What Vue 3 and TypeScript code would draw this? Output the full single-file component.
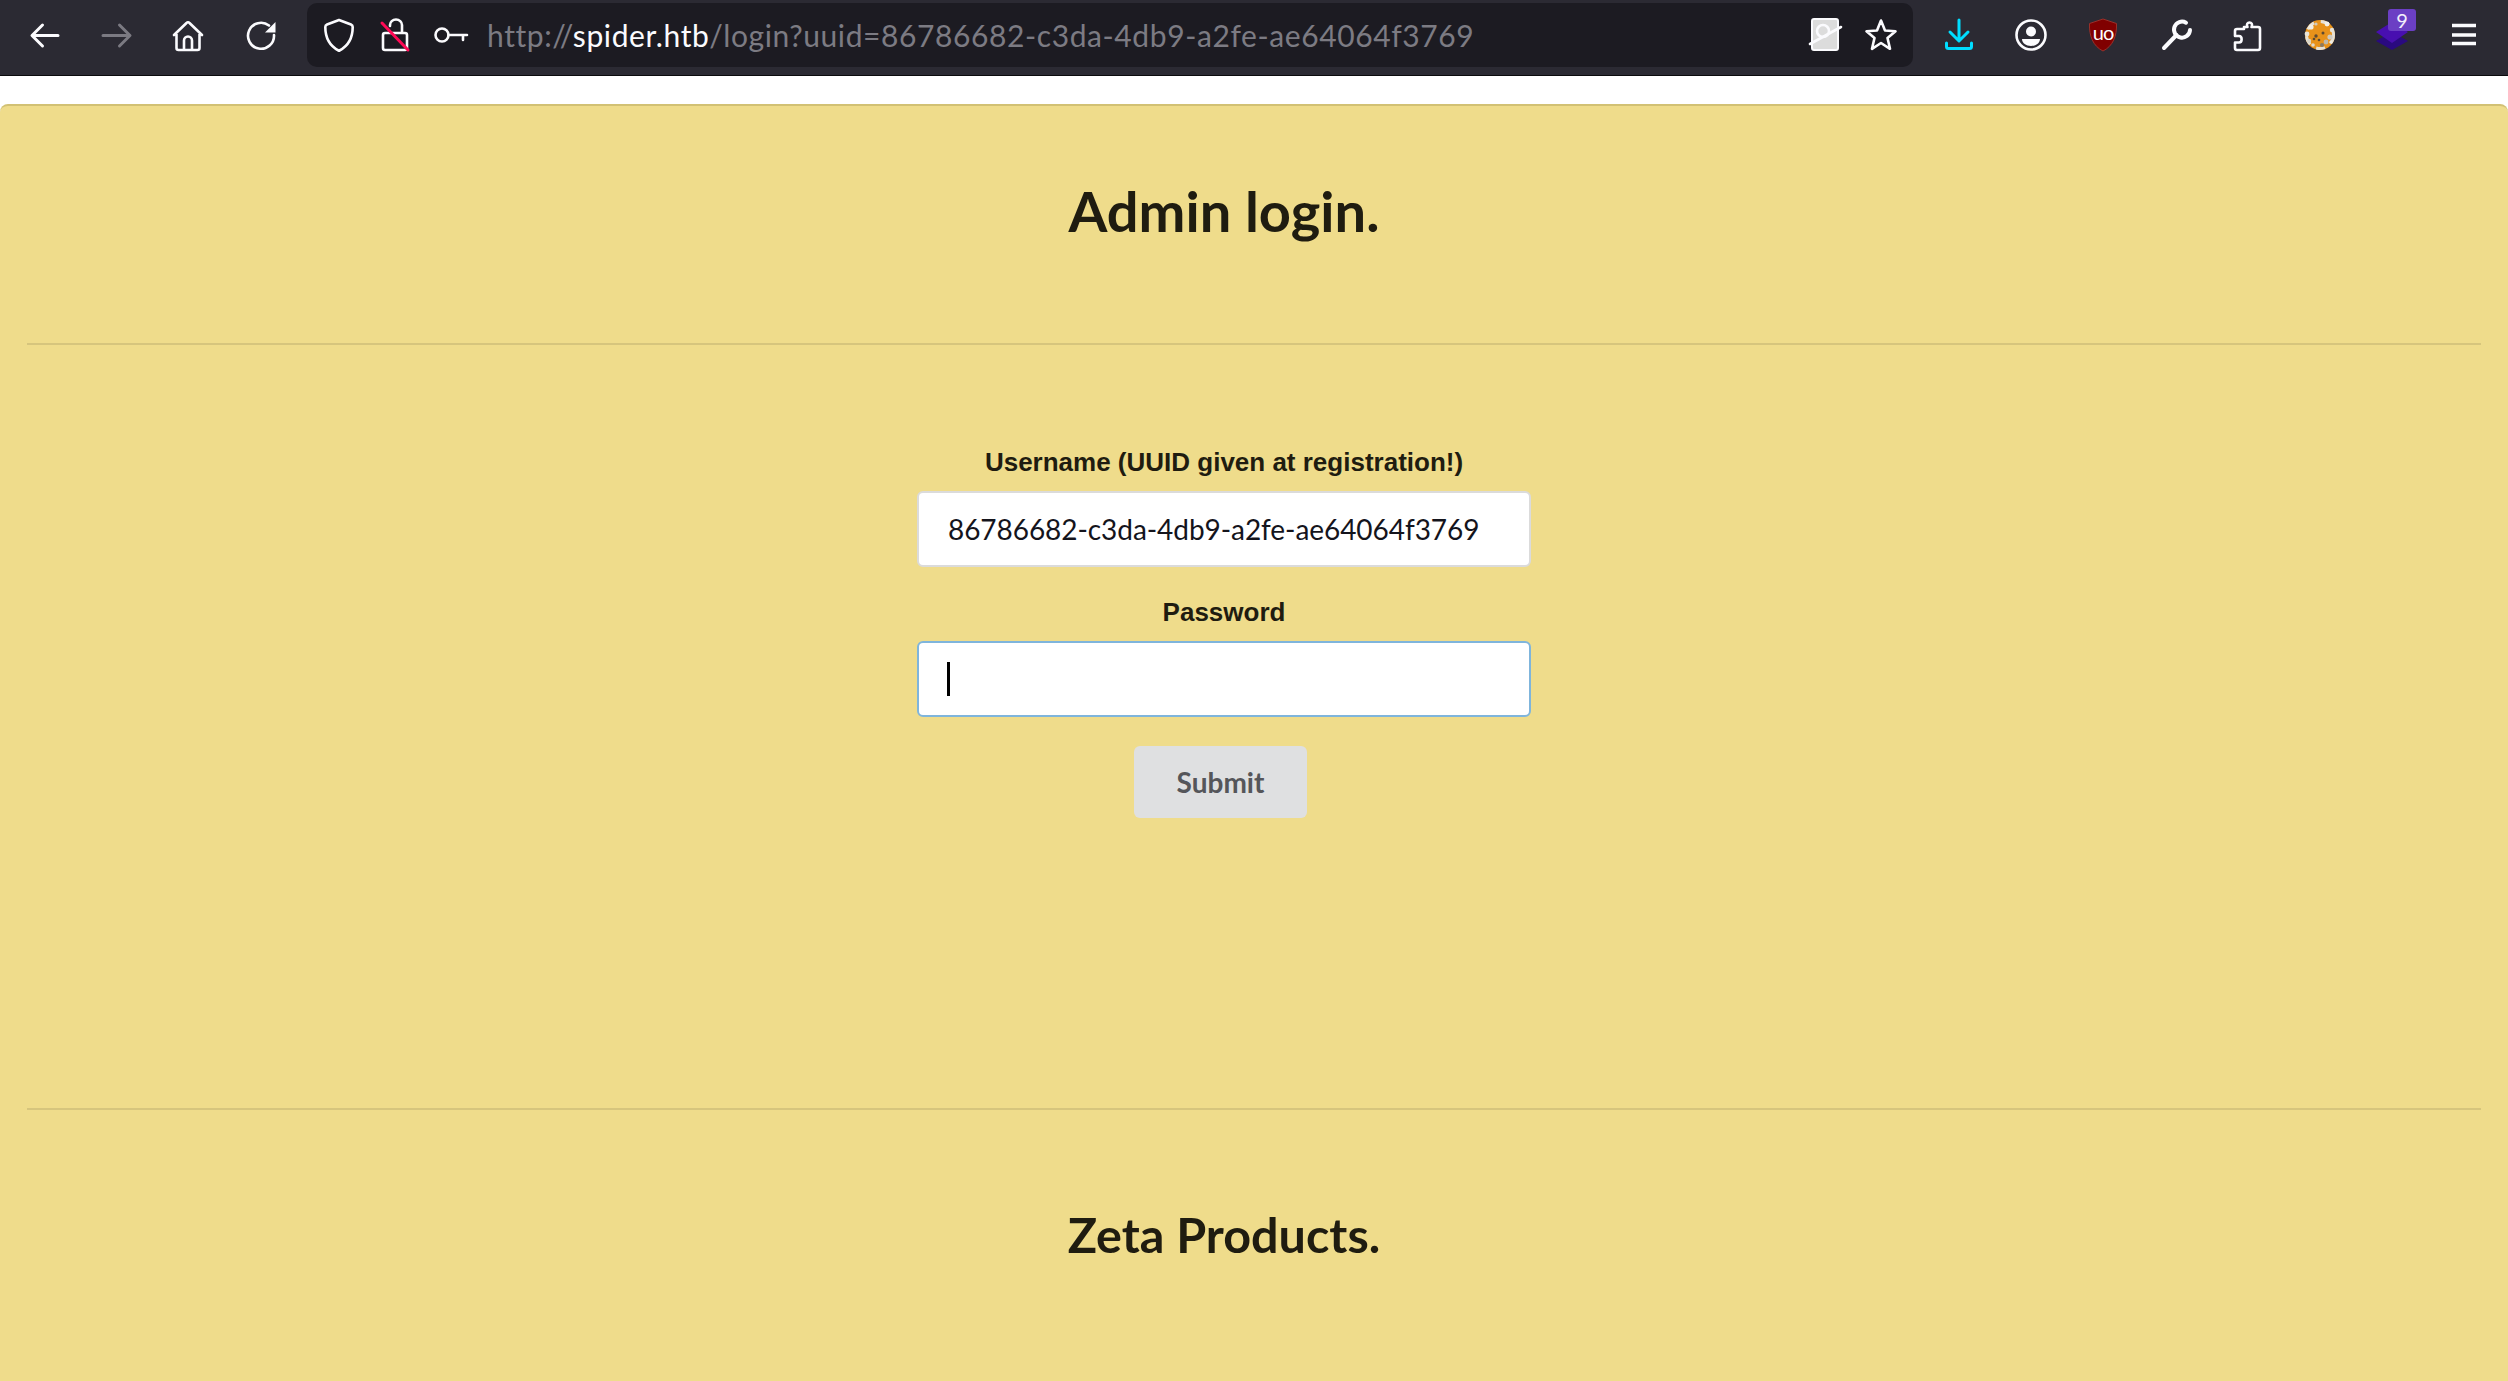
<script setup lang="ts">
const uuid = '86786682-c3da-4db9-a2fe-ae64064f3769'
const dots: [number, number, number, string][] = [
  [15, 15, 2.6, '#f1eee6'], [20, 12, 1.6, '#cfc9bc'], [31, 12, 2.4, '#f2efe8'], [36, 18, 2.2, '#e6e2d8'],
  [11, 22, 2.4, '#e9e4d8'], [13, 29, 2.2, '#d8d3c8'], [20, 24, 1.7, '#5d4a32'], [18, 27, 1.3, '#5d4a32'],
  [27, 21, 1.5, '#5d4a32'], [34, 25, 2.6, '#cfcac0'], [30, 30, 2.4, '#bdb8ac'], [26, 33, 2, '#8a7a62'],
  [23, 28, 1.3, '#5d4a32'], [17, 33, 1.8, '#ded8cc'], [35, 30, 1.6, '#f1eee6']
]
</script>

<template>
  <div class="page">
    <header class="toolbar">
      <div class="ibox">
        <svg viewBox="0 0 48 48" class="ic"><path d="M37 23.500H13M21.500 13 11 23.500 21.500 34" /></svg>
      </div>
      <div class="ibox">
        <svg viewBox="0 0 48 48" class="ic dim"><path d="M10 23.500h24M26.500 13 37 23.500 26.500 34" /></svg>
      </div>
      <div class="ibox">
        <svg viewBox="0 0 48 48" class="ic thin"><path d="M9 23 21.500 11a2 2 0 0 1 3 0L37 23M11.500 20.500V36a2 2 0 0 0 2 2h19a2 2 0 0 0 2-2V20.500M19 38v-9.500a4 4 0 0 1 8 0V38" /></svg>
      </div>
      <div class="ibox">
        <svg viewBox="0 0 48 48" class="ic thin"><path d="M32 13.500A13 13 0 1 0 37 23" /><path class="fill" d="M38.500 10v10.500H28z" /></svg>
      </div>

      <div class="urlbar">
        <div class="ibox small">
          <svg viewBox="0 0 48 48" class="ic thin"><path d="M24 8 36 12.500c1.300.5 1.700 1.300 1.700 2.500C37.700 26 33 34 24.500 38.500a1 1 0 0 1-1 0C15 34 10.300 26 10.300 15c0-1.200.4-2 1.700-2.500z" /></svg>
        </div>
        <div class="ibox small">
          <svg viewBox="0 0 48 48" class="ic thin">
            <path d="M19 14v-1a6 5.500 0 0 1 12 0v8M14 21h20a2 2 0 0 1 2 2v13a2 2 0 0 1-2 2H14a2 2 0 0 1-2-2V23a2 2 0 0 1 2-2z" />
            <path class="slash" d="M11 11 37 38" />
          </svg>
        </div>
        <div class="ibox small">
          <svg viewBox="0 0 48 48" class="ic thin"><circle cx="15" cy="23" r="6.500" /><path d="M21.500 23H40M36 23v5" /></svg>
        </div>
        <div class="url"><span class="dimtext">http://</span><span class="host">spider.htb</span><span class="dimtext">/login?uuid={{ uuid }}</span></div>
        <div class="url-end">
          <svg viewBox="0 0 48 48" class="ic wide">
            <rect class="pagefill" x="11" y="7" width="26" height="31" rx="2" />
            <circle class="lens" cx="22" cy="19" r="6" />
            <path class="lens" d="M9 32 40 15" />
          </svg>
          <svg viewBox="0 0 48 48" class="ic wide thin"><path d="M24 8.500 28 18.500 38.500 19.300 30.500 26 33 36.800 24 31 15 36.800 17.500 26 9.500 19.300 20 18.500z" /></svg>
        </div>
      </div>

      <div class="actions">
        <div class="ibox">
          <svg viewBox="0 0 48 48" class="ic cyan"><path d="M24 8V28M15 20l9 9 9-9M11.500 31v3.500a2 2 0 0 0 2 2h21a2 2 0 0 0 2-2V31" /></svg>
        </div>
        <div class="ibox">
          <svg viewBox="0 0 48 48" class="ic thin"><circle cx="24" cy="23" r="14.500" /><circle class="fill" cx="24" cy="19.500" r="5" /><path class="fill" d="M15 27h18c0 4-4 7-9 7s-9-3-9-7z" /></svg>
        </div>
        <div class="ibox">
          <svg viewBox="0 0 48 48" class="raw">
            <path d="M24 7 37.500 11.500C38 24 34 34 24 39 14 34 10 24 10.500 11.500z" fill="#800000" stroke="#99302a" stroke-width="1" />
            <text x="24" y="28" text-anchor="middle" class="ub">uo</text>
          </svg>
        </div>
        <div class="ibox">
          <svg viewBox="0 0 48 48" class="ic wrench"><path d="M34 10.700A8 8 0 1 0 38 18" /><path d="M24.500 23 12 36" /></svg>
        </div>
        <div class="ibox">
          <svg viewBox="0 0 48 48" class="ic thin"><path d="M20 15h3.500c-3-6 7-6 4 0H34a2 2 0 0 1 2 2v19a2 2 0 0 1-2 2H13a2 2 0 0 1-2-2V30.500h4c3.500 0 3.500-6.500 0-6.500h-4V19a2 2 0 0 1 2-2h7z" /></svg>
        </div>
        <div class="ibox">
          <svg viewBox="0 0 48 48" class="raw">
            <circle cx="24" cy="23" r="15" fill="#e8921a" />
            <circle class="ring" cx="24" cy="23" r="13.500" />
            <circle v-for="(d, i) in dots" :key="i" :cx="d[0]" :cy="d[1]" :r="d[2]" :fill="d[3]" />
          </svg>
        </div>
        <div class="ibox stack">
          <svg viewBox="0 0 48 48" class="raw">
            <path d="M24 20 40 29 24 38 8 29z" fill="#2a0a80" />
            <path d="M24 10 40 20 24 31 8 20z" fill="#480fb0" />
          </svg>
          <span class="badge">9</span>
        </div>
        <div class="ibox">
          <svg viewBox="0 0 48 48" class="ic menu"><path d="M12 13.500H36M12 23H36M12 31.500H36" /></svg>
        </div>
      </div>
    </header>

    <main class="panel">
      <h1 class="title">Admin login.</h1>
      <hr class="rule" />
      <form class="form" @submit.prevent>
        <label class="label" for="u">Username (UUID given at registration!)</label>
        <input id="u" class="field" type="text" :value="uuid" readonly />
        <label class="label second" for="p">Password</label>
        <div class="pw">
          <input id="p" class="field focus" type="password" readonly />
          <span class="caret"></span>
        </div>
        <button class="btn" type="button">Submit</button>
      </form>
      <hr class="rule lower" />
      <h2 class="subtitle">Zeta Products.</h2>
    </main>
  </div>
</template>

<style>
html, body { margin: 0; background: #fff; overflow: hidden; }
</style>

<style scoped>
.page { width: 2508px; height: 1381px; overflow: hidden; background: #fff; font-family: Lato, sans-serif; }
.toolbar {
  height: 75px; box-sizing: content-box; background: #2b2a33; border-bottom: 1px solid #0b0b0d;
  display: flex; align-items: flex-start; padding: 0 0 0 21px; gap: 24px; margin-bottom: 28px;
}
.ibox { width: 48px; height: 48px; margin-top: 12px; flex: none; position: relative; }
.ibox.small { margin-top: 9px; }
.ibox.small + .ibox.small { margin-left: 8px; }
.ic, .raw { width: 48px; height: 48px; display: block; overflow: visible; }
.ic path, .ic circle { fill: none; stroke: #fbfbfe; stroke-width: 3; stroke-linecap: round; stroke-linejoin: round; }
.ic.thin path, .ic.thin circle { stroke-width: 2.6; }
.ic.dim path { stroke: #7b7a82; }
.ic.cyan path { stroke: #00ddff; }
.ic.menu path { stroke-linecap: butt; stroke-width: 3.4; }
.ic.wrench path { stroke-width: 4; }
.ic .fill, .ic.thin .fill { fill: #fbfbfe; stroke: none; }
.ic .slash, .ic.thin .slash { stroke: #ff0a55; stroke-width: 3; }
.ic .pagefill { fill: #dcdcdc; stroke: #fbfbfe; stroke-width: 2; }
.ic .lens { fill: none; stroke: #fbfbfe; stroke-width: 2.6; }
.ring { fill: none; stroke: #e6e1d6; stroke-width: 3; stroke-dasharray: 9 7; }
.urlbar {
  width: 1606px; height: 64px; margin: 3px 0 0 -2px; flex: none; box-sizing: border-box; padding-left: 8px;
  background: #1c1b22; border-radius: 10px; display: flex; align-items: flex-start; position: relative;
}
.url { margin-left: 12px; height: 64px; line-height: 64px; font-size: 30px; white-space: nowrap; letter-spacing: 0.6px; }
.dimtext { color: #7c7b83; }
.host { color: #fbfbfe; }
.url-end { margin-left: auto; display: flex; gap: 8px; padding: 9px 8px 0 0; }
.actions { display: flex; gap: 24.2px; margin-left: -2px; }
.raw text.ub { fill: #fff; font: 400 20px Lato, sans-serif; letter-spacing: -1px; }
.badge {
  position: absolute; left: 20px; top: -3px; width: 28px; height: 22px; border-radius: 3px; background: #6b3fc4;
  color: #f2eefc; font: 20px/22px Lato, sans-serif; text-align: center;
}
.panel {
  box-sizing: border-box; height: 1277px; background: #efdc8b; border-top: 2px solid #d2c174;
  border-radius: 8px 8px 0 0; padding: 0 27px; color: #1f1c10; text-align: center; overflow: hidden;
}
.title { margin: 65px 0 0; padding-right: 60px; font: 700 56px/80px Lato, sans-serif; }
.rule { margin: 92px 0 0; border: 0; border-top: 2px solid #d6c57d; }
.form { display: flex; flex-direction: column; align-items: center; padding: 99px 60px 0 0; }
.label { font: 700 26px/36px "Liberation Sans", Arial, sans-serif; color: #1f1c10; }
.label.second { margin-top: 27px; }
.field {
  display: block; width: 614px; height: 76px; margin-top: 11px; box-sizing: border-box; padding: 0 29px;
  background: #fff; border: 2px solid #dbdbdb; border-radius: 6px; font: 28px Lato, sans-serif; letter-spacing: -0.06px; color: #14141c; outline: none;
}
.field.focus { border-color: #7fb5dc; }
.pw { position: relative; width: 614px; }
.caret { position: absolute; left: 30px; top: 32px; width: 3px; height: 34px; background: #000; }
.btn {
  width: 173px; height: 72px; margin: 29px 7px 0 0; border: 0; border-radius: 6px; background: #dfe0e1;
  color: #55565a; font: 700 28px Lato, sans-serif; padding: 0;
}
.rule.lower { margin-top: 290px; }
.subtitle { margin: 84px 0 0; padding-right: 60px; font: 700 48.5px/80px Lato, sans-serif; }
</style>
